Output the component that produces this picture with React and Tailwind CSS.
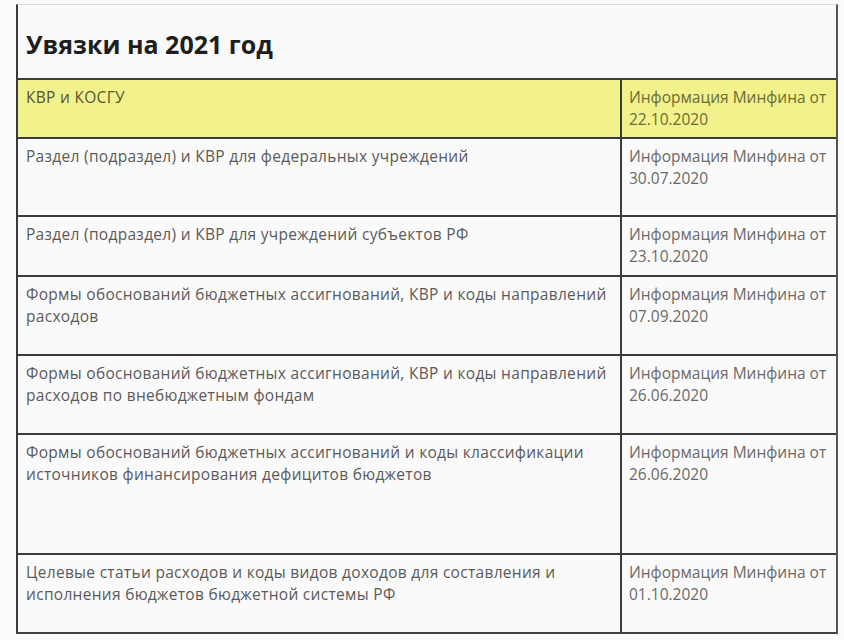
import React from "react";

const rows = [
  { left: ["КВР и КОСГУ"], date: "22.10.2020", h: "h-[59px]", yellow: true },
  { left: ["Раздел (подраздел) и КВР для федеральных учреждений"], date: "30.07.2020", h: "h-[78px]" },
  { left: ["Раздел (подраздел) и КВР для учреждений субъектов РФ"], date: "23.10.2020", h: "h-[60px]" },
  { left: ["Формы обоснований бюджетных ассигнований, КВР и коды направлений", "расходов"], date: "07.09.2020", h: "h-[79px]" },
  { left: ["Формы обоснований бюджетных ассигнований, КВР и коды направлений", "расходов по внебюджетным фондам"], date: "26.06.2020", h: "h-[79px]" },
  { left: ["Формы обоснований бюджетных ассигнований и коды классификации", "источников финансирования дефицитов бюджетов"], date: "26.06.2020", h: "h-[120px]" },
  { left: ["Целевые статьи расходов и коды видов доходов для составления и", "исполнения бюджетов бюджетной системы РФ"], date: "01.10.2020", h: "h-[79px]" },
];

export default function App() {
  return (
    <div className="w-[844px] h-[640px] bg-[#fbfbfb] pt-[4px] pl-[16px]" style={{ fontFamily: "'Open Sans', 'Noto Sans', sans-serif" }}>
      <div className="w-[822px] border-t border-t-[#dcdcdc] border-l-2 border-r-2 border-b-2 border-l-[#3a3a3a] border-r-[#555] border-b-[#444] bg-[#fafafa]">
        <div className="h-[73px] pl-[8px] pt-[24px]">
          <h1 className="text-[25px] leading-[30px] font-bold text-[#1e1e1e]">Увязки на 2021 год</h1>
        </div>
        {rows.map((r, i) => (
          <div
            key={i}
            className={`flex ${r.h} border-t-2 border-t-[#3c3c3c] ${r.yellow ? "bg-[#f2f28c]" : ""}`}
          >
            <div className={`flex-1 pl-[8px] pt-[6px] text-[15.5px] leading-[22px] tracking-[0.3px] ${r.yellow ? "text-[#555530]" : "text-[#5a5a5a]"}`}>
              {r.left.map((l, j) => (
                <div key={j} className="whitespace-nowrap">{l}</div>
              ))}
            </div>
            <div className={`w-[216px] border-l-2 border-l-[#3c3c3c] pl-[7px] pt-[6px] text-[15.5px] leading-[22px] ${r.yellow ? "text-[#6b6b35]" : "text-[#6a6a6a]"}`}>
              <div className="whitespace-nowrap">Информация Минфина от</div>
              <div>{r.date}</div>
            </div>
          </div>
        ))}
      </div>
    </div>
  );
}
